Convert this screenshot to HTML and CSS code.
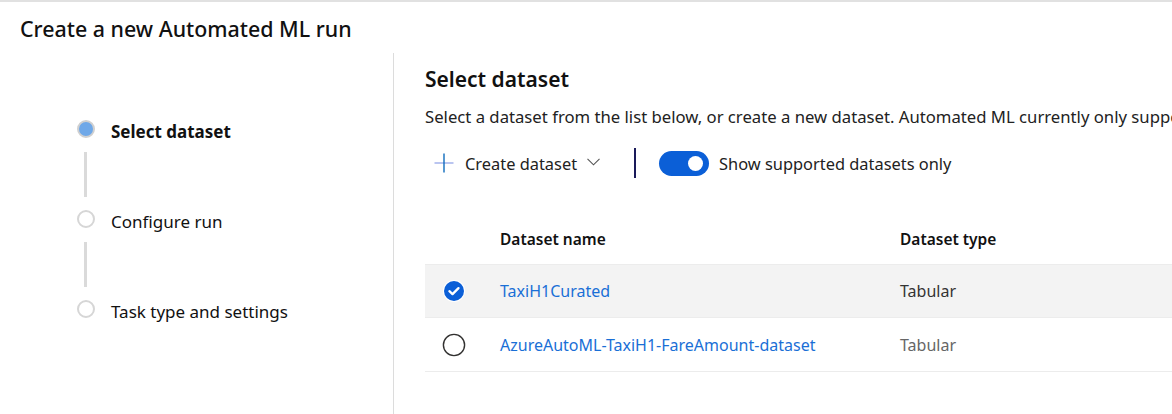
FILE: index.html
```html
<!DOCTYPE html>
<html>
<head>
<meta charset="utf-8">
<link rel="stylesheet" href="styles.css">
</head>
<body>
<div class="page">
  <header class="header">Create a new Automated ML run</header>
  <div class="main">
    <nav class="steps">
      <div class="step">
        <span class="dot dot-active"></span>
        <span class="step-label step-label-active">Select dataset</span>
      </div>
      <div class="connector"></div>
      <div class="step">
        <span class="dot"></span>
        <span class="step-label">Configure run</span>
      </div>
      <div class="connector"></div>
      <div class="step">
        <span class="dot"></span>
        <span class="step-label">Task type and settings</span>
      </div>
    </nav>
    <section class="content">
      <h2 class="title">Select dataset</h2>
      <p class="desc">Select a dataset from the list below, or create a new dataset. Automated ML currently only supports tabular datasets.</p>
      <div class="toolbar">
        <button class="create-btn">
          <svg class="plus" width="20" height="20" viewBox="0 0 20 20"><path d="M0.5 10H19.5" stroke="#8c9fe6" stroke-width="1.2" fill="none"/><path d="M10 0.5V19.5" stroke="#0f6cbd" stroke-width="1.4" fill="none"/></svg>
          <span>Create dataset</span>
          <svg class="chev" width="13" height="8" viewBox="0 0 13 8"><path d="M0.5 0.8L6.5 6.8L12.5 0.8" stroke="#555" stroke-width="1.1" fill="none"/></svg>
        </button>
        <span class="tb-sep"></span>
        <span class="toggle"><span class="knob"></span></span>
        <span class="toggle-label">Show supported datasets only</span>
      </div>
      <div class="table">
        <div class="row head">
          <div class="c-sel"></div>
          <div class="c-name">Dataset name</div>
          <div class="c-type">Dataset type</div>
        </div>
        <div class="row selected">
          <div class="c-sel">
            <svg width="24" height="24" viewBox="0 0 24 24"><circle cx="12" cy="12" r="11" fill="#ffffff"/><circle cx="12" cy="12" r="10" fill="#0b5fd7"/><path d="M7.4 12.2L10.5 15.1L16.5 9.1" stroke="#fff" stroke-width="2.3" fill="none" stroke-linecap="round" stroke-linejoin="round"/></svg>
          </div>
          <div class="c-name"><a class="link">TaxiH1Curated</a></div>
          <div class="c-type">Tabular</div>
        </div>
        <div class="row">
          <div class="c-sel">
            <svg width="24" height="24" viewBox="0 0 24 24"><circle cx="12" cy="12" r="10.6" fill="none" stroke="#323130" stroke-width="1.4"/></svg>
          </div>
          <div class="c-name"><a class="link">AzureAutoML-TaxiH1-FareAmount-dataset</a></div>
          <div class="c-type c-type-muted">Tabular</div>
        </div>
      </div>
    </section>
  </div>
</div>
</body>
</html>
```
FILE: styles.css
```css
* { box-sizing: border-box; }
html, body { margin: 0; padding: 0; background: #fff; }
body {
  font-family: "Noto Sans", "Open Sans", sans-serif;
  color: #111;
  width: 1172px;
  height: 414px;
  overflow: hidden;
}
.page {
  border-top: 2px solid #e1e1e1;
  height: 414px;
  display: flex;
  flex-direction: column;
}
.header {
  height: 51px;
  padding: 13px 0 0 20px;
  font-size: 21.4px;
  font-weight: 500;
  line-height: 28px;
  color: #111;
}
.main {
  flex: 1;
  display: flex;
}
.steps {
  width: 394px;
  border-right: 1px solid #dcdcdc;
  padding: 68px 0 0 77px;
  display: flex;
  flex-direction: column;
}
.step {
  display: flex;
  align-items: center;
  height: 22px;
}
.dot {
  width: 18px;
  height: 18px;
  border-radius: 50%;
  border: 2px solid #d6d6d6;
  background: #fff;
  flex: none;
  margin-top: -7px;
}
.dot-active {
  background: #6fa8e8;
  border-color: #d0d0d0;
}
.step-label {
  margin-left: 16px;
  font-size: 17px;
  line-height: 22px;
  color: #111;
}
.step-label-active { font-weight: 700; }
.connector {
  width: 3px;
  height: 45px;
  background: #dadada;
  margin: 9px 0 14px 7px;
}
.content {
  flex: 1;
  padding: 13px 0 0 31px;
  overflow: hidden;
}
.title {
  margin: 0;
  font-size: 21px;
  font-weight: 600;
  line-height: 26px;
  color: #111;
}
.desc {
  margin: 13px 0 0;
  font-size: 16.7px;
  line-height: 24px;
  white-space: nowrap;
  color: #222;
}
.toolbar {
  display: flex;
  align-items: center;
  height: 32px;
  margin-top: 18px;
}
.create-btn {
  display: flex;
  align-items: center;
  background: none;
  border: none;
  padding: 0 0 0 9px;
  font-family: inherit;
  font-size: 16.4px;
  color: #222;
}
.create-btn .plus { margin-right: 11px; }
.create-btn .chev { margin-left: 10px; margin-top: -2px; }
.tb-sep {
  width: 2px;
  height: 30px;
  background: #1a1a5a;
  margin-left: 34px;
}
.toggle {
  width: 50px;
  height: 25px;
  border-radius: 13px;
  background: #0b5fd7;
  margin-left: 23px;
  display: flex;
  align-items: center;
  justify-content: flex-end;
  padding-right: 6px;
}
.knob {
  width: 15px;
  height: 15px;
  border-radius: 50%;
  background: #fff;
}
.toggle-label {
  margin-left: 10px;
  font-size: 16.4px;
  color: #222;
}
.table {
  margin-top: 34px;
  width: 100%;
}
.row {
  display: flex;
  align-items: center;
  height: 54px;
  border-bottom: 1px solid #ececec;
  font-size: 16px;
}
.row.head {
  height: 52px;
  font-weight: 600;
  font-size: 15.5px;
  color: #111;
}
.row.selected { background: #f3f3f3; height: 53px; }
.c-sel {
  width: 75px;
  display: flex;
  padding-left: 17px;
}
.c-name { width: 400px; }
.c-type { color: #333; }
.c-type-muted { color: #666; }
.head .c-type { color: #111; }
.link {
  color: #1a6fd6;
  text-decoration: none;
}
```
